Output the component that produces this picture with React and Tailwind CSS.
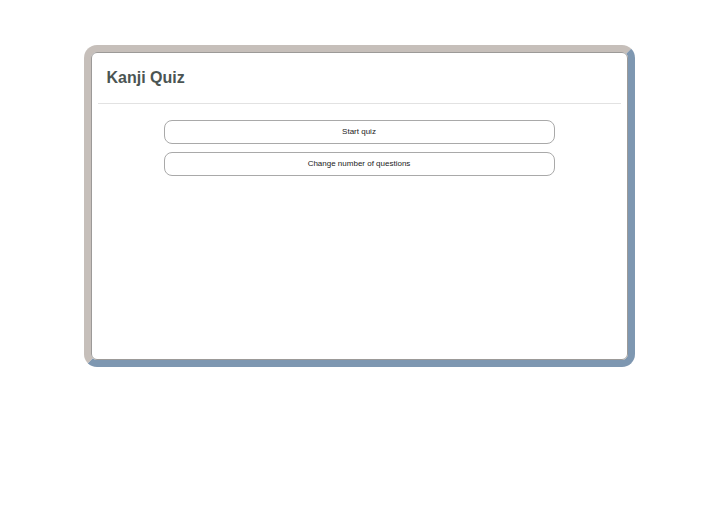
import React from "react";

export default function App() {
  return (
    <div className="h-screen overflow-hidden bg-white pt-[45px] font-['Liberation_Sans',Arial,sans-serif]">
      {/* frame: light top/left edge, blue bottom/right edge */}
      <div className="mx-auto h-[322px] w-[551px] rounded-[13px] border-[7px] border-t-[#c6bfba] border-l-[#c6bfba] border-r-[#7e97b1] border-b-[#7e97b1]">
        <div className="h-full rounded-[6px] border border-[#9c9a98] bg-white px-[6px] pt-[7px]">
          {/* header */}
          <div className="h-[44px] border-b border-[#e2e2e2] pl-[9px] pt-[9px]">
            <h1 className="text-[16px] font-bold leading-[18px] text-[#4b5553]">Kanji Quiz</h1>
          </div>

          <div className="flex flex-col items-center gap-2 pt-4">
            <button className="h-[24px] w-[391px] rounded-[8px] border border-[#a9a9a9] bg-white text-[8px] text-[#222]">
              Start quiz
            </button>
            <button className="h-[24px] w-[391px] rounded-[8px] border border-[#a9a9a9] bg-white text-[8px] text-[#222]">
              Change number of questions
            </button>
          </div>
        </div>
      </div>
    </div>
  );
}
